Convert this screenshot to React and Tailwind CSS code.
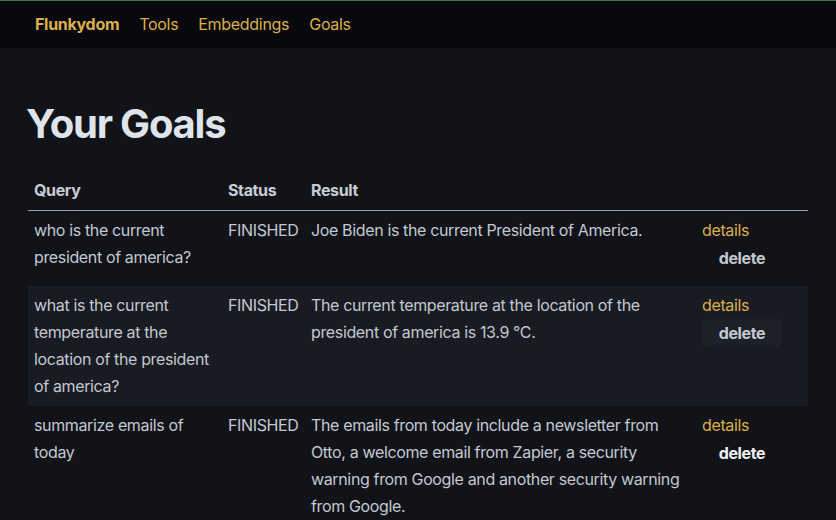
import { useState } from 'react';

const navLinks = ['Tools', 'Embeddings', 'Goals'];

const goals = [
  {
    query: 'who is the current president of america?',
    status: 'FINISHED',
    result: 'Joe Biden is the current President of America.',
    deleteStyle: 'text-[#c3c8d1]',
  },
  {
    query: 'what is the current temperature at the location of the president of america?',
    status: 'FINISHED',
    result: 'The current temperature at the location of the president of america is 13.9 °C.',
    deleteStyle: 'bg-[#1c2129] text-[#c3c8d1]',
    striped: true,
  },
  {
    query: 'summarize emails of today',
    status: 'FINISHED',
    result:
      'The emails from today include a newsletter from Otto, a welcome email from Zapier, a security warning from Google and another security warning from Google.',
    deleteStyle: 'text-[#eef0f3]',
  },
];

function GoalRow({ goal }) {
  return (
    <tr className={goal.striped ? 'bg-[#181b21]' : ''}>
      <td className="px-1.5 py-1.5 align-top">{goal.query}</td>
      <td className="px-1.5 py-1.5 align-top">{goal.status}</td>
      <td className="px-1.5 py-1.5 align-top">{goal.result}</td>
      <td className="px-1.5 py-1.5 align-top">
        <a href="#" className="block text-[#dbaf4b]">
          details
        </a>
        <button
          type="button"
          className={`mb-2 h-7 w-20 rounded-md text-center font-bold ${goal.deleteStyle}`}
        >
          delete
        </button>
      </td>
    </tr>
  );
}

export default function App() {
  const [items] = useState(goals);

  return (
    <div className="min-h-[520px] bg-[#111318] font-['Inter',sans-serif] text-base leading-[27px] tracking-[-0.36px] text-[#c3c8d1]">
      <nav className="flex h-12 items-center gap-5 border-t border-[#3d7a3d] bg-[#07090d] px-[35px] tracking-[-0.3px]">
        <a href="#" className="font-bold text-[#dbaf4b]">
          Flunkydom
        </a>
        {navLinks.map((link) => (
          <a key={link} href="#" className="text-[#dbaf4b]">
            {link}
          </a>
        ))}
      </nav>

      <main className="px-7 pt-[52px]">
        <h1 className="-ml-0.5 text-[40px] font-bold leading-[48px] tracking-[-1.2px] text-[#dfe3ea]">
          Your Goals
        </h1>

        <table className="mt-[23px] w-[780px] table-fixed border-collapse text-left">
          <colgroup>
            <col className="w-[194px]" />
            <col className="w-[83px]" />
            <col className="w-[391px]" />
            <col className="w-[112px]" />
          </colgroup>
          <thead>
            <tr className="border-b border-[#9a9fa8]">
              <th className="px-1.5 py-1.5 font-bold text-[#c8ccd4]">Query</th>
              <th className="px-1.5 py-1.5 font-bold text-[#c8ccd4]">Status</th>
              <th className="px-1.5 py-1.5 font-bold text-[#c8ccd4]">Result</th>
              <th className="px-1.5 py-1.5"></th>
            </tr>
          </thead>
          <tbody>
            {items.map((goal) => (
              <GoalRow key={goal.query} goal={goal} />
            ))}
          </tbody>
        </table>
      </main>
    </div>
  );
}
